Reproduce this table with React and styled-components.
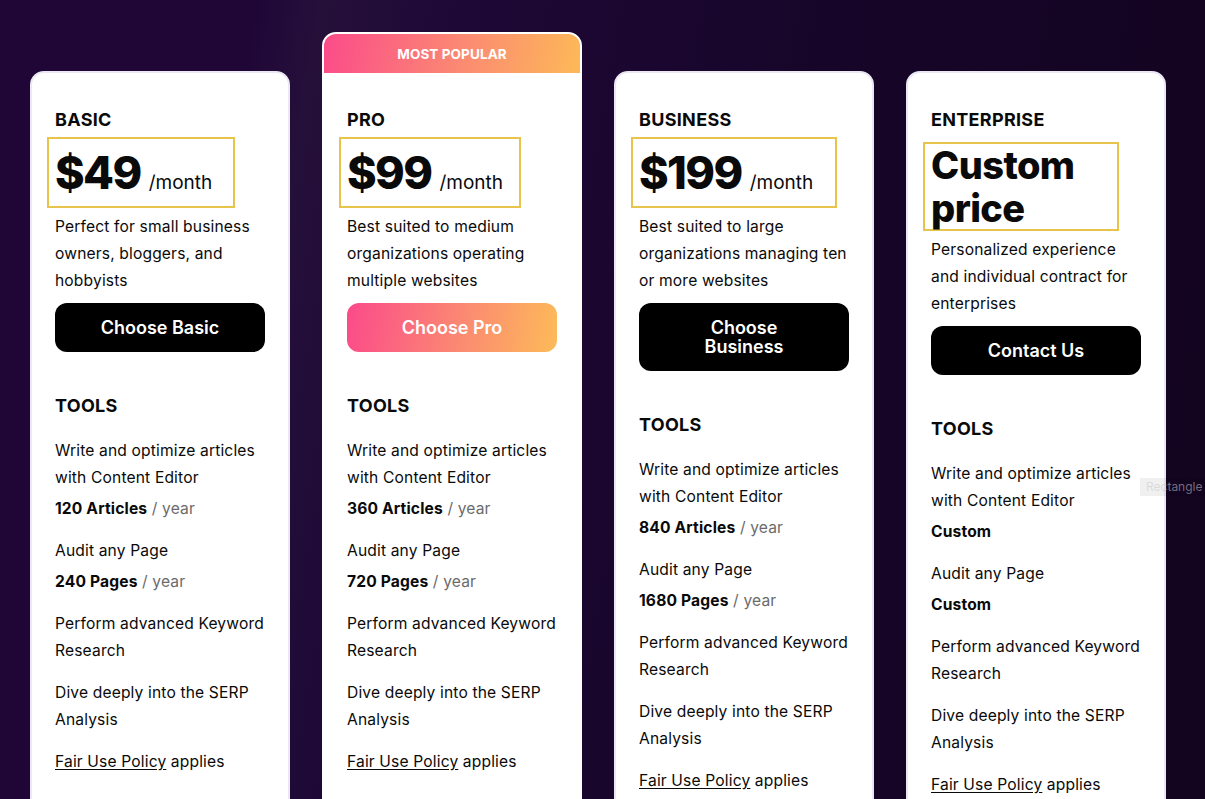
import styled, { createGlobalStyle } from 'styled-components';

const GlobalStyle = createGlobalStyle`
	html, body {
		margin: 0;
		height: 100%;
		overflow: hidden;
	}
	body {
		font-family: 'Inter', 'Liberation Sans', sans-serif;
		background: linear-gradient(100deg, #1f0637 0%, #1f0637 19%, #25103a 24%, #1e0836 34%, #170529 62%, #13041f 100%);
		color: #0a0a0a;
	}
`;

const Page = styled.div`
	position: relative;
	height: 799px;
	padding: 32px 0 0 30px;
	box-sizing: border-box;
`;

const Row = styled.div`
	display: flex;
	align-items: flex-start;
	gap: 32px;
`;

const Card = styled.div`
	width: 260px;
	box-sizing: border-box;
	margin-top: ${(p) => (p.$popular ? '0' : '39px')};
	background: #fff;
	border: 2px solid ${(p) => (p.$popular ? '#ffffff' : '#ebe8f4')};
	border-radius: 14px;
	overflow: hidden;
`;

const Banner = styled.div`
	height: 39px;
	display: flex;
	align-items: center;
	justify-content: center;
	background: linear-gradient(100deg, #fb4b8a 0%, #fb8b72 55%, #fdb957 100%);
	color: #fff;
	font-size: 13.5px;
	font-weight: 700;
	letter-spacing: 0.1px;
`;

const Body = styled.div`
	padding: 33px 23px 60px 23px;
`;

const PlanName = styled.h3`
	margin: 0;
	font-size: 18px;
	line-height: 27px;
	font-weight: 700;
	letter-spacing: 0.3px;
`;

const PriceBox = styled.div`
	display: flex;
	flex-wrap: wrap;
	align-items: baseline;
	gap: 8px;
	width: ${(p) => p.$width}px;
	box-sizing: border-box;
	margin: ${(p) => (p.$custom ? '9px' : '4px')} 0 0 -8px;
	padding: ${(p) => (p.$custom ? '0 6px' : '8px 6px')};
	border: 2px solid #e8c44c;
`;

const Amount = styled.span`
	font-size: ${(p) => (p.$custom ? '38px' : '45px')};
	line-height: ${(p) => (p.$custom ? '42.5px' : '51px')};
	font-weight: 800;
	letter-spacing: ${(p) => (p.$custom ? '-0.6px' : '-1.6px')};
	font-family: 'Inter', 'Lato', sans-serif;
`;

const Period = styled.span`
	font-size: 19px;
	font-weight: 400;
`;

const Description = styled.p`
	margin: 5px 0 0;
	font-size: 15.6px;
	line-height: 27px;
	letter-spacing: 0.15px;
`;

const CtaButton = styled.button`
	display: block;
	width: 100%;
	margin-top: 9px;
	padding: 15px 38px;
	border: none;
	border-radius: 12px;
	background: ${(p) => (p.$gradient ? 'linear-gradient(100deg, #fb4a8a 0%, #fb8a72 55%, #fdbb58 100%)' : '#000')};
	color: #fff;
	font-family: 'Inter', sans-serif;
	font-size: 18px;
	line-height: 19px;
	font-weight: 600;
	cursor: pointer;
`;

const SectionTitle = styled.h4`
	margin: 40px 0 0;
	font-size: 18px;
	line-height: 27px;
	font-weight: 700;
	letter-spacing: 0.3px;
`;

const FeatureList = styled.ul`
	list-style: none;
	margin: 18px 0 0;
	padding: 0;
	display: flex;
	flex-direction: column;
	gap: 15px;
`;

const Feature = styled.li`
	font-size: 15.6px;
	line-height: 27px;
	letter-spacing: 0.15px;
`;

const Quota = styled.div`
	margin-top: 4px;
	b {
		font-weight: 700;
	}
	span {
		color: #6b6b6b;
	}
`;

const PolicyLink = styled.a`
	color: inherit;
	text-decoration: underline;
	text-underline-offset: 2px;
`;

const SelectionLabel = styled.div`
	position: absolute;
	left: 1140px;
	top: 478px;
	width: 70px;
	height: 18px;
	background: rgba(0, 0, 0, 0.06);
	color: rgba(200, 200, 205, 0.55);
	font-size: 12px;
	line-height: 18px;
	padding-left: 6px;
	box-sizing: border-box;
`;

const plans = [
	{
		name: 'BASIC',
		price: '$49',
		boxWidth: 188,
		desc: 'Perfect for small business owners, bloggers, and hobbyists',
		cta: 'Choose Basic',
		articles: '120 Articles',
		pages: '240 Pages',
	},
	{
		name: 'PRO',
		price: '$99',
		boxWidth: 182,
		popular: true,
		desc: 'Best suited to medium organizations operating multiple websites',
		cta: 'Choose Pro',
		articles: '360 Articles',
		pages: '720 Pages',
	},
	{
		name: 'BUSINESS',
		price: '$199',
		boxWidth: 206,
		desc: 'Best suited to large organizations managing ten or more websites',
		cta: 'Choose Business',
		articles: '840 Articles',
		pages: '1680 Pages',
	},
	{
		name: 'ENTERPRISE',
		price: 'Custom price',
		boxWidth: 196,
		custom: true,
		desc: 'Personalized experience and individual contract for enterprises',
		cta: 'Contact Us',
		articles: 'Custom',
		pages: 'Custom',
	},
];

const QuotaLine = ({ value, custom }) => (
	<Quota>
		<b>{value}</b>
		{!custom && <span> / year</span>}
	</Quota>
);

const PlanCard = ({ plan }) => (
	<Card $popular={plan.popular}>
		{plan.popular && <Banner>MOST POPULAR</Banner>}
		<Body>
			<PlanName>{plan.name}</PlanName>
			<PriceBox $width={plan.boxWidth} $custom={plan.custom}>
				<Amount $custom={plan.custom}>{plan.price}</Amount>
				{!plan.custom && <Period>/month</Period>}
			</PriceBox>
			<Description>{plan.desc}</Description>
			<CtaButton $gradient={plan.popular}>{plan.cta}</CtaButton>
			<SectionTitle>TOOLS</SectionTitle>
			<FeatureList>
				<Feature>
					Write and optimize articles with Content Editor
					<QuotaLine value={plan.articles} custom={plan.custom} />
				</Feature>
				<Feature>
					Audit any Page
					<QuotaLine value={plan.pages} custom={plan.custom} />
				</Feature>
				<Feature>Perform advanced Keyword Research</Feature>
				<Feature>Dive deeply into the SERP Analysis</Feature>
				<Feature>
					<PolicyLink href='#'>Fair Use Policy</PolicyLink> applies
				</Feature>
			</FeatureList>
		</Body>
	</Card>
);

const App = () => (
	<>
		<GlobalStyle />
		<Page>
			<Row>
				{plans.map((plan) => (
					<PlanCard key={plan.name} plan={plan} />
				))}
			</Row>
			<SelectionLabel>Rectangle</SelectionLabel>
		</Page>
	</>
);

export default App;
